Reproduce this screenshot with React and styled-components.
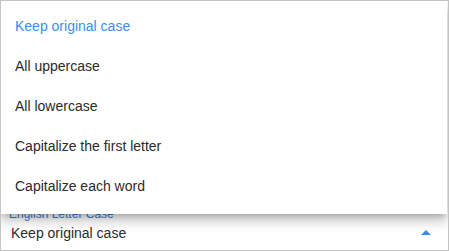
import React from "react";
import styled, { createGlobalStyle } from "styled-components";

const Global = createGlobalStyle`
  html, body { margin: 0; padding: 0; background: #fff; }
  body { font-family: "Liberation Sans", Arial, sans-serif; }
`;

const Frame = styled.div`
  position: relative;
  width: 449px;
  height: 251px;
  box-sizing: border-box;
  border: 1px solid #c4c4c4;
  background: #fff;
  overflow: hidden;
  display: flex;
  flex-direction: column;
  justify-content: flex-end;
`;

const Field = styled.div`
  display: flex;
  flex-direction: column;
  padding: 0 0 7px 0;
`;

const Label = styled.div`
  font-size: 12px;
  line-height: 14px;
  color: #3d7fd6;
  padding-left: 8px;
`;

const ValueRow = styled.div`
  display: flex;
  align-items: center;
  justify-content: space-between;
  height: 20px;
  padding: 0 17px 0 10px;
  font-size: 14px;
  color: #2b2b2b;
  margin-top: 2px;
`;

const Arrow = styled.span`
  width: 0;
  height: 0;
  border-left: 5px solid transparent;
  border-right: 5px solid transparent;
  border-bottom: 5px solid #3a8ee6;
  margin-top: -1px;
`;

const Menu = styled.ul`
  position: absolute;
  top: 0;
  left: 0;
  right: 1px;
  margin: 0;
  padding: 5px 0 8px;
  list-style: none;
  background: #fff;
  box-shadow: 0 5px 6px -3px rgba(0, 0, 0, 0.22),
    0 8px 10px 1px rgba(0, 0, 0, 0.12), 0 3px 14px 2px rgba(0, 0, 0, 0.08);
`;

const Item = styled.li`
  height: 40px;
  line-height: 40px;
  padding-left: 14px;
  font-size: 14px;
  color: ${(p) => (p.$selected ? "#3d8ef0" : "#2b2b2b")};
  white-space: nowrap;
`;

const options = [
  "Keep original case",
  "All uppercase",
  "All lowercase",
  "Capitalize the first letter",
  "Capitalize each word",
];

export default function App() {
  return (
    <>
      <Global />
      <Frame>
        <Field>
          <Label>English Letter Case</Label>
          <ValueRow>
            <span>Keep original case</span>
            <Arrow />
          </ValueRow>
        </Field>
        <Menu>
          {options.map((o, i) => (
            <Item key={o} $selected={i === 0}>
              {o}
            </Item>
          ))}
        </Menu>
      </Frame>
    </>
  );
}
